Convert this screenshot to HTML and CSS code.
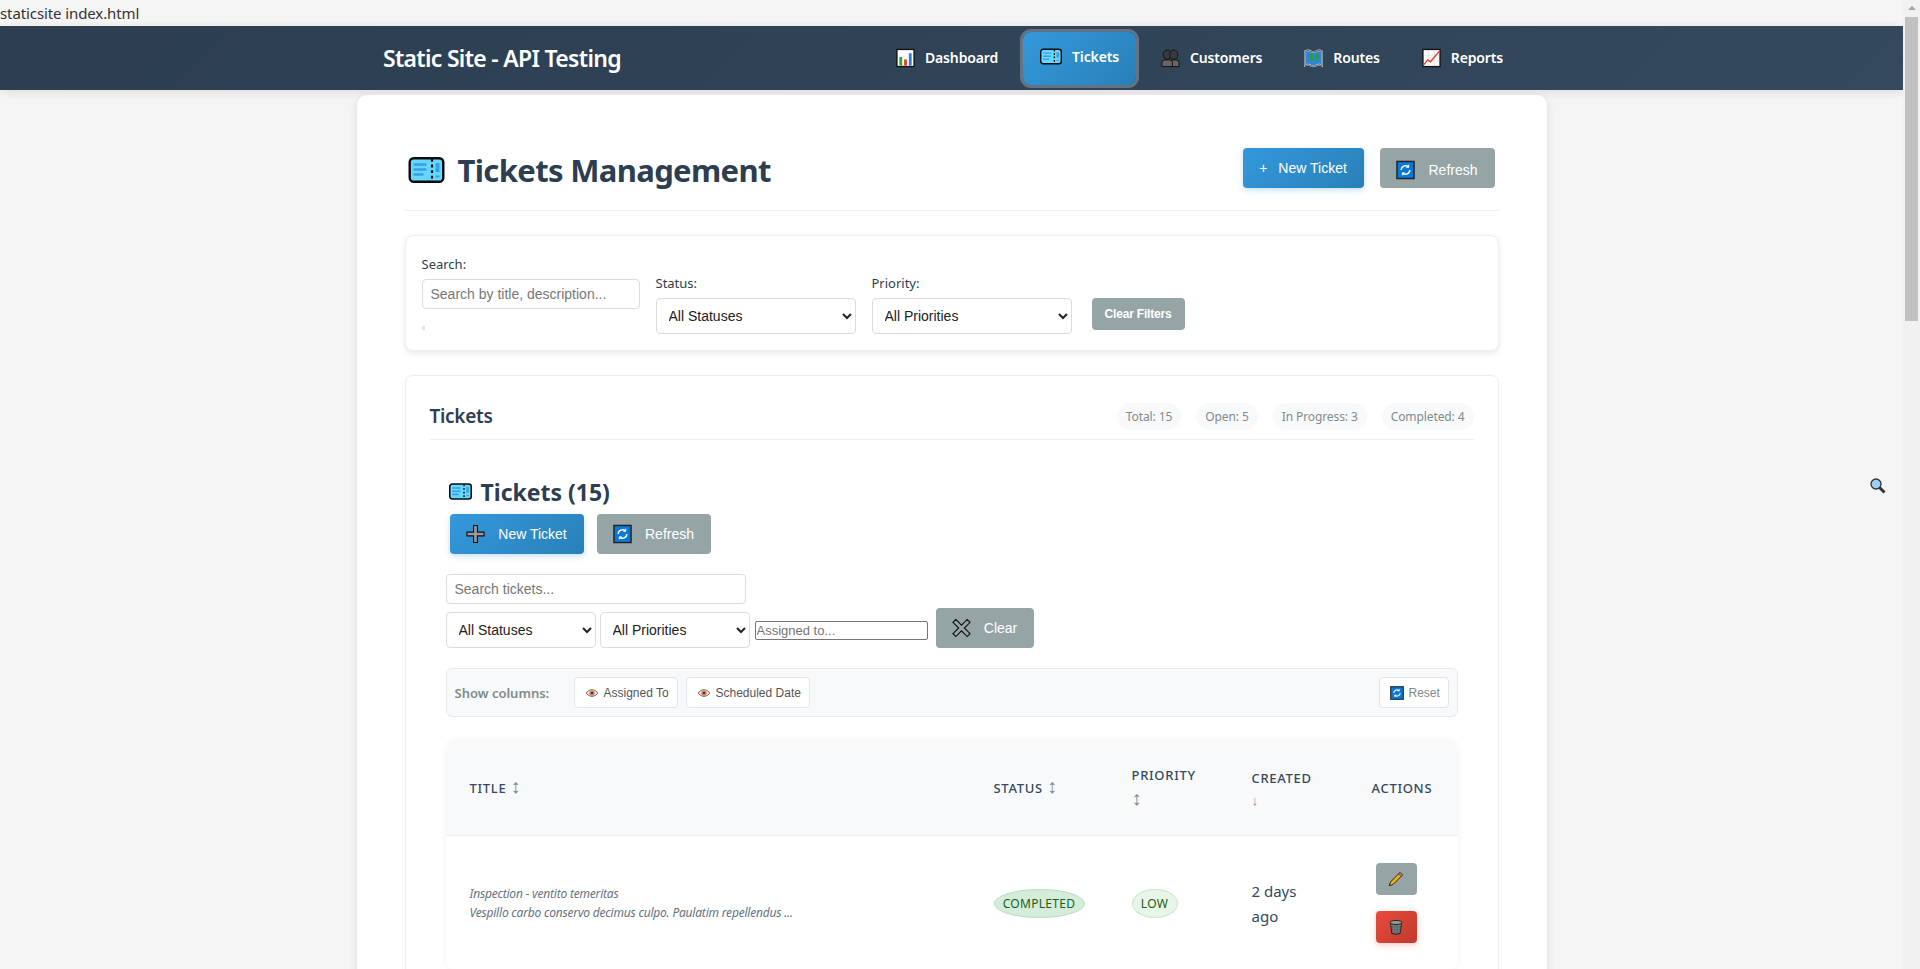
FILE: index.html
```html
<!DOCTYPE html>
<html lang="en">
<head>
    <meta charset="UTF-8">
    <meta name="viewport" content="width=device-width, initial-scale=1.0">
    <title>Tickets Management</title>
    <link rel="stylesheet" href="styles.css">
</head>
<body>
    <!-- Shared emoji style icons -->
    <svg class="icon-defs" xmlns="http://www.w3.org/2000/svg">
        <symbol id="i-ticket" viewBox="0 0 36 26">
            <rect x="1.200" y="1.200" width="33.600" height="23.600" rx="4" fill="#66d7ff" stroke="#0b0b0b" stroke-width="2.400"/>
            <path d="M5 7.500h13M5 12.500h13M5 17.500h10" stroke="#3a9fe8" stroke-width="2.400"/>
            <path d="M23.500 2v22" stroke="#0b0b0b" stroke-width="2.200" stroke-dasharray="2.800 2.800"/>
            <path d="M29 6v9M29 18.500v2" stroke="#3a9fe8" stroke-width="4"/>
        </symbol>
        <symbol id="i-chart" viewBox="0 0 20 20">
            <rect x="1" y="1" width="18" height="18" fill="#fff" stroke="#111" stroke-width="1.400"/>
            <rect x="3.500" y="9" width="3" height="9" fill="#2aa82a"/>
            <rect x="8.500" y="11.500" width="3" height="6.500" fill="#e2402a"/>
            <rect x="13.500" y="5" width="3" height="13" fill="#2a80e0"/>
        </symbol>
        <symbol id="i-people" viewBox="0 0 20 20">
            <path d="M10 19v-4q0-3 3-3h3q3 0 3 3v4z" fill="#666" stroke="#111"/>
            <path d="M1 19v-4q0-3 3-3h5q3 0 3 3v4z" fill="#666" stroke="#111"/>
            <ellipse cx="6.500" cy="6.500" rx="4.200" ry="5" fill="#3a3a3a" stroke="#111"/>
            <ellipse cx="13.500" cy="6.500" rx="4.200" ry="5" fill="#3a3a3a" stroke="#111"/>
        </symbol>
        <symbol id="i-map" viewBox="0 0 20 20">
            <path d="M1 3q4-2 6 0q3 1.500 6 0q3-2 6 0v15q-3-2-6 0q-3 1.500-6 0q-2-2-6 0z" fill="#2f86d8" stroke="#dfe8ee" stroke-width="1.800"/>
            <path d="M1 3q4-2 6 0q3 1.500 6 0q3-2 6 0v15q-3-2-6 0q-3 1.500-6 0q-2-2-6 0z" fill="none" stroke="#111" stroke-width=".7"/>
            <path d="M5 6l4-1 1 4-1 5-2-1-1-3zM12 7l4-1 0 5-3 3-1-3z" fill="#2a9a48"/>
        </symbol>
        <symbol id="i-report" viewBox="0 0 20 20">
            <rect x="1" y="1" width="18" height="18" fill="#fff" stroke="#111" stroke-width="1.400"/>
            <path d="M7 2v16M13 2v16M2 7h16M2 13h16" stroke="#ddd" stroke-width=".8"/>
            <path d="M2 17l4-5 3 2 9-11" fill="none" stroke="#e8402a" stroke-width="1.500"/>
        </symbol>
        <symbol id="i-refresh" viewBox="0 0 20 20">
            <rect x="1" y="1" width="18" height="18" fill="#0a78d8" stroke="#222" stroke-width="1.500"/>
            <path d="M5.500 10a4.500 4.500 0 0 1 7.500-3.300M14.500 10a4.500 4.500 0 0 1-7.500 3.300" fill="none" stroke="#fff" stroke-width="1.500"/>
            <path d="M13.800 4v3.500h-3.500M6.200 16v-3.500h3.500" fill="#fff"/>
        </symbol>
        <symbol id="i-plus" viewBox="0 0 20 20">
            <path d="M8 1h4v7h7v4h-7v7h-4v-7h-7v-4h7z" fill="#9a9a9a" stroke="#111" stroke-width="1.200"/>
        </symbol>
        <symbol id="i-cross" viewBox="0 0 20 20">
            <path d="M4 1l6 6 6-6 3 3-6 6 6 6-3 3-6-6-6 6-3-3 6-6-6-6z" fill="#9aa5a5" stroke="#111" stroke-width="1.200"/>
        </symbol>
        <symbol id="i-eye" viewBox="0 0 16 16">
            <path d="M1 8q7-8 14 0q-7 8-14 0z" fill="#f3e6d8" stroke="#666"/>
            <circle cx="8" cy="8" r="3" fill="#c8764a"/>
            <circle cx="8" cy="8" r="1.200" fill="#333"/>
        </symbol>
        <symbol id="i-pencil" viewBox="0 0 16 16">
            <path d="M12 1.500l2.500 2.500L5 13.500 1.200 14.800 2.500 11z" fill="#f8b400" stroke="#222"/>
            <path d="M12 1.500l2.500 2.500-1.400 1.400L10.600 2.900z" fill="#e57c8a" stroke="#222" stroke-width=".6"/>
        </symbol>
        <symbol id="i-trash" viewBox="0 0 16 16">
            <path d="M2.500 4h11l-1.300 10.500q-4.200 1.500-8.400 0z" fill="#7a7f82" stroke="#222"/>
            <path d="M4.500 6v8M7 6v8.500M9.500 6v8.500M12 6v8M3 8h10M3.500 10.500h9M4 13h8" stroke="#555" stroke-width=".5"/>
            <ellipse cx="8" cy="3.500" rx="6" ry="2" fill="#999" stroke="#222"/>
        </symbol>
        <symbol id="i-glass" viewBox="0 0 16 16">
            <path d="M9.500 9.500l5 5" stroke="#333" stroke-width="3"/>
            <circle cx="6" cy="6" r="5" fill="#9ed0f5" stroke="#333" stroke-width="1.300"/>
        </symbol>
    </svg>

    <div class="viewport">
        <div class="page">
            <div class="file-bar">staticsite index.html</div>

            <header class="navbar">
                <div class="navbar-inner">
                    <div class="brand">Static Site - API Testing</div>
                    <ul class="nav-links">
                        <li><a class="nav-link" href="#"><svg class="nav-icon"><use href="#i-chart"/></svg>Dashboard</a></li>
                        <li><a class="nav-link active" href="#"><svg class="nav-icon nav-icon-wide"><use href="#i-ticket"/></svg>Tickets</a></li>
                        <li><a class="nav-link" href="#"><svg class="nav-icon"><use href="#i-people"/></svg>Customers</a></li>
                        <li><a class="nav-link" href="#"><svg class="nav-icon"><use href="#i-map"/></svg>Routes</a></li>
                        <li><a class="nav-link" href="#"><svg class="nav-icon"><use href="#i-report"/></svg>Reports</a></li>
                    </ul>
                </div>
            </header>

            <main class="main-card">
                <div class="page-header">
                    <h1><svg class="h1-icon"><use href="#i-ticket"/></svg>Tickets Management</h1>
                    <div class="header-actions">
                        <button class="btn btn-primary btn-new">+<span class="btn-gap">New Ticket</span></button>
                        <button class="btn btn-secondary btn-top-refresh"><svg class="btn-icon"><use href="#i-refresh"/></svg>Refresh</button>
                    </div>
                </div>

                <!-- Filters -->
                <section class="filter-card">
                    <div class="filter-group filter-search">
                        <label>Search:</label>
                        <input class="text-input" type="text" placeholder="Search by title, description...">
                        <span class="search-dot"></span>
                    </div>
                    <div class="filter-group">
                        <label>Status:</label>
                        <select class="select-input"><option>All Statuses</option></select>
                    </div>
                    <div class="filter-group">
                        <label>Priority:</label>
                        <select class="select-input"><option>All Priorities</option></select>
                    </div>
                    <button class="btn-clear-filters">Clear Filters</button>
                </section>

                <!-- Tickets list -->
                <section class="tickets-card">
                    <div class="tickets-head">
                        <h3>Tickets</h3>
                        <div class="stats">
                            <span class="stat">Total: 15</span>
                            <span class="stat">Open: 5</span>
                            <span class="stat">In Progress: 3</span>
                            <span class="stat">Completed: 4</span>
                        </div>
                    </div>

                    <div class="list-view">
                        <h2><svg class="h2-icon"><use href="#i-ticket"/></svg>Tickets (15)</h2>
                        <div class="list-actions">
                            <button class="btn btn-primary btn-list-new"><svg class="btn-icon"><use href="#i-plus"/></svg>New Ticket</button>
                            <button class="btn btn-secondary btn-list-refresh"><svg class="btn-icon"><use href="#i-refresh"/></svg>Refresh</button>
                        </div>

                        <input class="text-input list-search" type="text" placeholder="Search tickets...">
                        <div class="list-filters">
                            <select class="select-input list-select"><option>All Statuses</option></select>
                            <select class="select-input list-select"><option>All Priorities</option></select>
                            <input class="assigned-input" type="text" placeholder="Assigned to...">
                            <button class="btn btn-secondary btn-clear"><svg class="btn-icon"><use href="#i-cross"/></svg>Clear</button>
                        </div>

                        <div class="columns-bar">
                            <span class="columns-label">Show columns:</span>
                            <button class="col-btn col-assigned"><svg class="col-icon"><use href="#i-eye"/></svg>Assigned To</button>
                            <button class="col-btn col-scheduled"><svg class="col-icon"><use href="#i-eye"/></svg>Scheduled Date</button>
                            <button class="col-btn col-reset"><svg class="col-icon"><use href="#i-refresh"/></svg>Reset</button>
                        </div>

                        <div class="table-wrap">
                            <table class="tickets-table">
                                <colgroup>
                                    <col class="col-title"><col class="col-status"><col class="col-priority"><col class="col-created"><col class="col-actions">
                                </colgroup>
                                <thead>
                                    <tr>
                                        <th>Title <span class="sort">↕</span></th>
                                        <th>Status <span class="sort">↕</span></th>
                                        <th>Priority <span class="sort">↕</span></th>
                                        <th class="th-created">Created <span class="sort sort-down">↓</span></th>
                                        <th>Actions</th>
                                    </tr>
                                </thead>
                                <tbody>
                                    <tr>
                                        <td class="title-cell">
                                            <div>Inspection - ventito temeritas</div>
                                            <div>Vespillo carbo conservo decimus culpo. Paulatim repellendus ...</div>
                                        </td>
                                        <td><span class="badge badge-completed">COMPLETED</span></td>
                                        <td><span class="badge badge-low">LOW</span></td>
                                        <td class="created-cell">2 days ago</td>
                                        <td>
                                            <button class="row-btn row-edit"><svg class="row-icon"><use href="#i-pencil"/></svg></button>
                                            <button class="row-btn row-delete"><svg class="row-icon"><use href="#i-trash"/></svg></button>
                                        </td>
                                    </tr>
                                </tbody>
                            </table>
                        </div>
                    </div>
                </section>
            </main>

            <svg class="float-glass"><use href="#i-glass"/></svg>
        </div>

        <div class="scrollbar">
            <div class="scroll-arrow"></div>
            <div class="scroll-thumb"></div>
        </div>
    </div>
</body>
</html>
```

FILE: styles.css
```css
/* Reset */
* {
    margin: 0;
    padding: 0;
    box-sizing: border-box;
}

body {
    font-family: "Noto Sans", "Open Sans", sans-serif;
    background: #f5f5f5;
    color: #2c3e50;
    height: 969px;
    overflow: hidden;
}

.icon-defs {
    display: none;
}

.viewport {
    display: flex;
    height: 969px;
}

.page {
    position: relative;
    flex: 1;
    min-width: 0;
    overflow: hidden;
}

/* Fake scrollbar */
.scrollbar {
    width: 17px;
    background: #f1f1f1;
    padding: 0 2px;
}

.scroll-arrow {
    width: 0;
    margin: 6px auto 0;
    border-left: 4px solid transparent;
    border-right: 4px solid transparent;
    border-bottom: 4px solid #a3a3a3;
}

.scroll-thumb {
    height: 304px;
    margin-top: 7px;
    background: #c1c1c1;
}

.file-bar {
    height: 26px;
    font-size: 15px;
    line-height: 26px;
    color: #333;
    letter-spacing: -0.1px;
}

/* Header */
.navbar {
    height: 64px;
    background: linear-gradient(135deg, #2c3e50, #34495e);
    box-shadow: 0 2px 10px rgba(0, 0, 0, 0.1);
}

.navbar-inner {
    display: flex;
    align-items: center;
    justify-content: space-between;
    height: 100%;
    padding: 0 383px 0 383px;
}

.brand {
    font-size: 23px;
    font-weight: 600;
    color: white;
    letter-spacing: -0.7px;
}

.nav-links {
    display: flex;
    gap: 8px;
    list-style: none;
    align-items: center;
}

.nav-link {
    display: flex;
    align-items: center;
    height: 53px;
    padding: 0 17px 1px;
    color: white;
    text-decoration: none;
    font-weight: 600;
    font-size: 14px;
    letter-spacing: -0.15px;
    border-radius: 8px;
}

.nav-link.active {
    background: linear-gradient(135deg, #3498db, #2980b9);
    box-shadow: 0 0 0 3px rgba(255, 255, 255, 0.25);
    padding-bottom: 3px;
}

.nav-icon {
    width: 19px;
    height: 20px;
    margin-right: 10px;
}

.nav-icon-wide {
    width: 22px;
    height: 17px;
}

/* Main card */
.main-card {
    width: 1190px;
    height: 900px;
    margin: 5px auto 0;
    padding: 0 48px;
    background: white;
    border-radius: 10px;
    box-shadow: 0 2px 10px rgba(0, 0, 0, 0.1);
}

.page-header {
    display: flex;
    justify-content: space-between;
    align-items: flex-start;
    height: 116px;
    padding-top: 53px;
    border-bottom: 1px solid #ecf0f1;
}

h1 {
    display: flex;
    align-items: center;
    font-size: 31px;
    font-weight: 700;
    line-height: 44px;
    letter-spacing: -0.65px;
}

.h1-icon {
    width: 37px;
    height: 26px;
    margin: 0 13px 0 3px;
}

.header-actions {
    display: flex;
    gap: 16px;
    padding-right: 4px;
}

/* Buttons */
.btn {
    display: inline-flex;
    align-items: center;
    justify-content: center;
    height: 40px;
    border: none;
    border-radius: 4px;
    color: white;
    font-family: "Liberation Sans", Arial, sans-serif;
    font-size: 14px;
    cursor: pointer;
}

.btn-primary {
    background: linear-gradient(135deg, #3498db, #2980b9);
    box-shadow: 0 2px 6px rgba(52, 152, 219, 0.3);
}

.btn-secondary {
    background: #95a5a6;
}

.btn-new {
    width: 121px;
}

.btn-gap {
    margin-left: 11px;
}

.btn-top-refresh {
    width: 115px;
    padding-top: 3px;
}

.btn-icon {
    width: 19px;
    height: 20px;
    margin-right: 13px;
}

/* Filters */
.filter-card {
    display: flex;
    align-items: flex-start;
    gap: 16px;
    height: 116px;
    margin-top: 24px;
    padding: 19px 16px 0;
    background: white;
    border: 1px solid #ecf0f1;
    border-radius: 8px;
    box-shadow: 0 2px 6px rgba(0, 0, 0, 0.1);
}

.filter-group {
    display: flex;
    flex-direction: column;
    margin-top: 19px;
}

.filter-group label {
    font-size: 13px;
    font-weight: 400;
    line-height: 18px;
    margin-bottom: 6px;
    color: #2c3e50;
}

.filter-search {
    width: 218px;
    margin-top: 0;
}

.search-dot {
    width: 3px;
    height: 4px;
    margin-top: 17px;
    background: #e4e4e4;
}

.text-input {
    width: 100%;
    height: 30px;
    padding: 0 8px;
    border: 1px solid #ddd;
    border-radius: 4px;
    background: white;
    font-family: "Liberation Sans", Arial, sans-serif;
    font-size: 14px;
}

.text-input::placeholder {
    color: #777;
}

.select-input {
    width: 200px;
    height: 36px;
    padding: 0 8px;
    border: 1px solid #ddd;
    border-radius: 4px;
    background: white;
    font-family: "Liberation Sans", Arial, sans-serif;
    font-size: 14px;
    color: #222;
}

.btn-clear-filters {
    width: 93px;
    height: 32px;
    margin: 43px 0 0 4px;
    background: #95a5a6;
    color: white;
    border: none;
    border-radius: 4px;
    font-family: "Liberation Sans", Arial, sans-serif;
    font-size: 12px;
    font-weight: 700;
    letter-spacing: -0.2px;
}

/* Tickets card */
.tickets-card {
    height: 700px;
    margin-top: 24px;
    padding: 0 24px;
    background: white;
    border: 1px solid #ecf0f1;
    border-radius: 8px;
    box-shadow: 0 1px 4px rgba(0, 0, 0, 0.05);
}

.tickets-head {
    display: flex;
    align-items: center;
    justify-content: space-between;
    height: 64px;
    padding-top: 17px;
    border-bottom: 1px solid #ecf0f1;
}

.tickets-head h3 {
    font-size: 19px;
    font-weight: 600;
    letter-spacing: -0.3px;
}

.stats {
    display: flex;
    gap: 15px;
}

.stat {
    height: 27px;
    padding: 0 9px;
    border-radius: 14px;
    background: #f8f9fa;
    font-size: 12px;
    line-height: 27px;
    color: #7f8c8d;
    letter-spacing: -0.1px;
}

.list-view {
    padding: 0 16px;
}

.list-view h2 {
    display: flex;
    align-items: center;
    height: 33px;
    margin-top: 35px;
    padding-left: 3px;
    font-size: 23px;
    font-weight: 700;
}

.h2-icon {
    width: 23px;
    height: 17px;
    margin-right: 9px;
}

.list-actions {
    display: flex;
    gap: 13px;
    margin-top: 6px;
    padding-left: 4px;
}

.btn-list-new {
    width: 134px;
}

.btn-list-refresh {
    width: 114px;
}

.list-search {
    display: block;
    width: 300px;
    margin-top: 20px;
}

.list-filters {
    display: flex;
    align-items: flex-end;
    gap: 4px;
    margin-top: 4px;
    height: 40px;
}

.list-select {
    width: 150px;
}

.assigned-input {
    width: 173px;
    height: 19px;
    margin: 0 4px 8px 1px;
    padding: 0 1px;
    border: 1px solid #767676;
    border-radius: 2px;
    font-family: "Liberation Sans", Arial, sans-serif;
    font-size: 13px;
}

.btn-clear {
    width: 98px;
}

/* Column toggles */
.columns-bar {
    display: flex;
    align-items: center;
    gap: 8px;
    height: 49px;
    margin-top: 20px;
    padding: 0 8px;
    background: #f8f9fa;
    border: 1px solid #e9ecef;
    border-radius: 6px;
}

.columns-label {
    width: 111px;
    font-size: 13px;
    font-weight: 600;
    color: #7f8c8d;
}

.col-btn {
    display: flex;
    align-items: center;
    height: 31px;
    padding: 0 0 0 10px;
    background: white;
    border: 1px solid #e1e4e8;
    border-radius: 4px;
    font-family: "Liberation Sans", Arial, sans-serif;
    font-size: 12px;
    color: #555;
}

.col-assigned {
    width: 104px;
}

.col-scheduled {
    width: 124px;
}

.col-reset {
    width: 70px;
    margin-left: auto;
    color: #7f8c8d;
}

.col-icon {
    width: 14px;
    height: 14px;
    margin-right: 5px;
}

/* Table */
.table-wrap {
    margin-top: 24px;
    border-radius: 10px;
    overflow: hidden;
    box-shadow: 0 0 6px rgba(0, 0, 0, 0.06);
}

.tickets-table {
    width: 1012px;
    border-collapse: separate;
    border-spacing: 0;
    table-layout: fixed;
}

.col-title { width: 524px; }
.col-status { width: 138px; }
.col-priority { width: 120px; }
.col-created { width: 120px; }
.col-actions { width: 110px; }

.tickets-table th {
    height: 95px;
    padding: 0 24px;
    background: #f8f9fa;
    border-bottom: 1px solid #ecf0f1;
    text-align: left;
    font-size: 13px;
    font-weight: 500;
    line-height: 25px;
    letter-spacing: 0.7px;
    text-transform: uppercase;
    color: #34495e;
}

.sort {
    color: #7f8c8d;
    font-family: "Liberation Sans", sans-serif;
    font-size: 20px;
    font-weight: 400;
    letter-spacing: 0;
    line-height: 20px;
}

.sort-down {
    display: block;
    font-size: 13px;
}

.tickets-table td {
    height: 134px;
    padding: 0 24px;
    vertical-align: middle;
    font-size: 16px;
    line-height: 25px;
}

.tickets-table .title-cell {
    font-size: 12px;
    font-style: italic;
    line-height: 19px;
    color: #66727f;
    letter-spacing: -0.2px;
}

.badge {
    display: inline-block;
    height: 29px;
    border: 1px solid;
    border-radius: 50%;
    font-size: 12px;
    line-height: 27px;
    letter-spacing: 0.3px;
    text-align: center;
    color: #1b5e20;
}

.badge-completed {
    width: 91px;
    background: #d4edda;
    border-color: #b9dcc1;
}

.badge-low {
    width: 46px;
    background: #e8f5e9;
    border-color: #c8e6c9;
}

.tickets-table .created-cell {
    padding-top: 1px;
    color: #34495e;
    font-size: 15px;
}

.row-btn {
    display: flex;
    align-items: center;
    justify-content: center;
    width: 41px;
    height: 32px;
    margin-left: 4px;
    border: none;
    border-radius: 4px;
}

.row-edit {
    background: #95a5a6;
}

.row-delete {
    margin-top: 16px;
    background: linear-gradient(135deg, #e74c3c, #c0392b);
    box-shadow: 0 2px 6px rgba(231, 76, 60, 0.3);
}

.row-icon {
    width: 16px;
    height: 16px;
}

.float-glass {
    position: absolute;
    top: 478px;
    left: 1870px;
    width: 16px;
    height: 16px;
}
```
